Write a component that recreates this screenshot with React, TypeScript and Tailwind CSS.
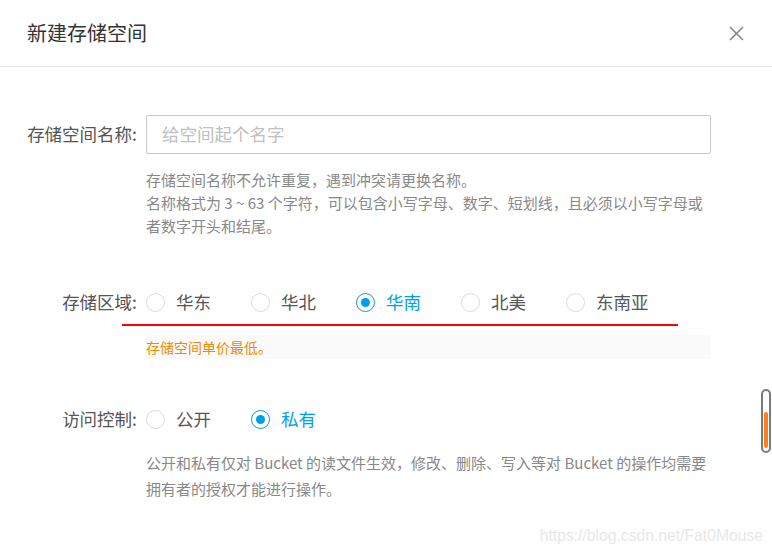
const cjk = '"Noto Sans CJK SC", "Noto Sans", sans-serif';

type Option = { label: string; checked?: boolean };

const regions: Option[] = [
  { label: '华东' },
  { label: '华北' },
  { label: '华南', checked: true },
  { label: '北美' },
  { label: '东南亚' },
];

const access: Option[] = [{ label: '公开' }, { label: '私有', checked: true }];

function Radio({ label, checked }: Option) {
  return (
    <label className="flex w-[105px] shrink-0 items-center">
      <span
        className={
          checked
            ? 'flex h-[19px] w-[19px] items-center justify-center rounded-full border border-[#00a0e9]'
            : 'h-[19px] w-[19px] rounded-full border border-[#dcdcdc]'
        }
      >
        {checked && <span className="h-[9px] w-[9px] rounded-full bg-[#00a0e9]" />}
      </span>
      <span className={checked ? 'ml-[11px] text-[17.5px] text-[#00a0e9]' : 'ml-[11px] text-[17.5px] text-[#555]'}>
        {label}
      </span>
    </label>
  );
}

function Row({ label, children }: { label: string; children: React.ReactNode }) {
  return (
    <div className="flex h-[30px] items-center">
      <div className="w-[137px] shrink-0 text-right text-[17.5px] text-[#555]">{label}</div>
      <div className="ml-[9px] flex items-center">{children}</div>
    </div>
  );
}

export default function App() {
  return (
    <div className="relative h-[553px] w-[772px] overflow-hidden bg-white" style={{ fontFamily: cjk }}>
      <div className="flex h-[67px] items-center justify-between border-b border-[#e6e6e6] pl-[27px] pr-[27px]">
        <h1 className="text-[20px] text-[#333]">新建存储空间</h1>
        <svg width="17" height="17" viewBox="0 0 17 17" className="text-[#888]">
          <path d="M2 2 L15 15 M15 2 L2 15" stroke="currentColor" strokeWidth="1.6" fill="none" />
        </svg>
      </div>

      <div className="mt-[48px] flex items-center">
        <div className="w-[137px] shrink-0 text-right text-[17.5px] text-[#555]">存储空间名称:</div>
        <div className="ml-[9px] flex h-[39px] w-[565px] items-center rounded-[2px] border border-[#c8c8c8] px-[15px] text-[17.5px] text-[#c0c0c0]">
          给空间起个名字
        </div>
      </div>
      <div className="ml-[146px] mt-[14px] text-[15px] leading-[23px] text-[#888]">
        <p>存储空间名称不允许重复，遇到冲突请更换名称。</p>
        <p>名称格式为 3 ~ 63 个字符，可以包含小写字母、数字、短划线，且必须以小写字母或</p>
        <p>者数字开头和结尾。</p>
      </div>

      <div className="mt-[50px]">
        <Row label="存储区域:">
          {regions.map((r) => (
            <Radio key={r.label} {...r} />
          ))}
        </Row>
      </div>
      <div className="ml-[122px] mt-[7px] h-[2px] w-[556px] bg-[#ff0000]" />
      <div className="ml-[146px] mt-[9px] flex h-[24px] w-[565px] items-center bg-[#fafafa] text-[14px] text-[#f08a00]">
        存储空间单价最低。
      </div>

      <div className="mt-[45px]">
        <Row label="访问控制:">
          {access.map((r) => (
            <Radio key={r.label} {...r} />
          ))}
        </Row>
      </div>
      <div className="ml-[146px] mt-[16px] text-[15px] leading-[26px] text-[#888]">
        <p>公开和私有仅对 Bucket 的读文件生效，修改、删除、写入等对 Bucket 的操作均需要</p>
        <p>拥有者的授权才能进行操作。</p>
      </div>

      {/* scrollbar */}
      <div className="absolute left-[761px] top-[389px] flex h-[64px] w-[10px] flex-col justify-end rounded-full border-2 border-[#7a7a7a] px-[1px] pb-[3px]">
        <div className="h-[36px] w-full rounded-full bg-[#ff7f1f]" />
      </div>

      <div
        className="absolute right-[9px] top-[524px] text-[15.7px] text-[#e8e8e8]"
        style={{ fontFamily: '"Liberation Sans", Arial, sans-serif' }}
      >
        https://blog.csdn.net/Fat0Mouse
      </div>
    </div>
  );
}
